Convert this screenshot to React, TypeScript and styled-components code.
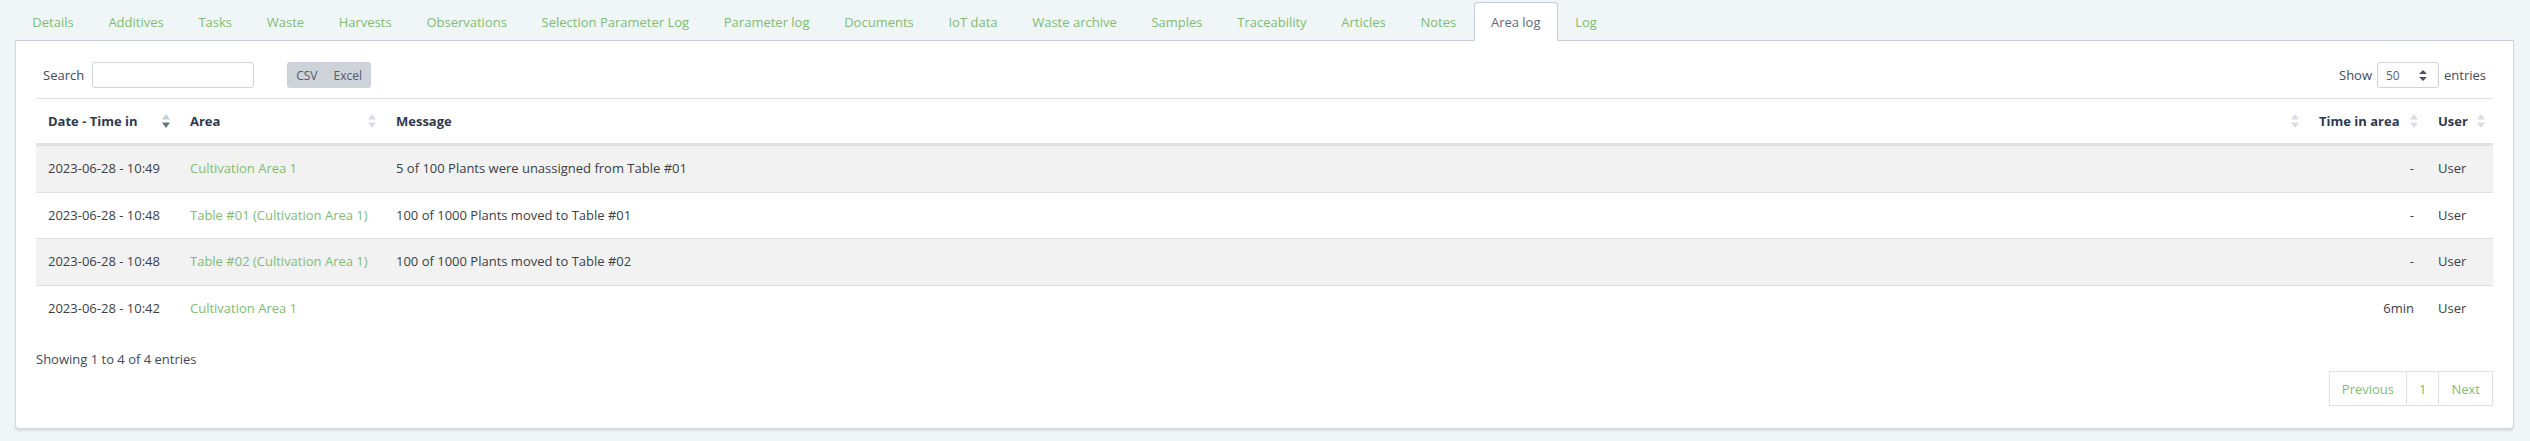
import React from 'react';
import styled, { createGlobalStyle } from 'styled-components';

const GlobalStyle = createGlobalStyle`
  body {
    margin: 0;
    background: #f0f5f8;
    font-family: "Open Sans", "Liberation Sans", sans-serif;
    font-size: 13px;
    color: #3b3f46;
  }
`;

const Page = styled.div`
  padding: 2px 16px 13px 15px;
`;

const TabBar = styled.div`
  display: flex;
  border-bottom: 1px solid #c9ced6;
  height: 38px;
`;

const Tab = styled.div<{ $active?: boolean }>`
  height: 39px;
  box-sizing: border-box;
  display: flex;
  align-items: center;
  padding: 0 16.35px;
  border: 1px solid ${(p) => (p.$active ? '#c9ced6' : 'transparent')};
  border-bottom-color: ${(p) => (p.$active ? '#fff' : 'transparent')};
  border-radius: 4px 4px 0 0;
  background: ${(p) => (p.$active ? '#fff' : 'transparent')};
  color: ${(p) => (p.$active ? '#5d6a80' : '#80bd72')};
  white-space: nowrap;
`;

const Card = styled.div`
  background: #fff;
  border: 1px solid #d5d9de;
  border-top: none;
  border-radius: 0 0 4px 4px;
  box-shadow: 0 2px 2px rgba(0, 0, 0, 0.1);
  padding: 19px 20px 22px 20px;
`;

const Controls = styled.div`
  display: flex;
  align-items: center;
  justify-content: space-between;
  height: 30px;
  margin-bottom: 8px;
  padding: 0 7px;
`;

const ControlGroup = styled.div`
  display: flex;
  align-items: center;
  gap: 5px;
`;

const Label = styled.span`
  color: #454b57;
`;

const SearchInput = styled.input`
  width: 162px;
  height: 26px;
  box-sizing: border-box;
  border: 1px solid #d0d4da;
  border-radius: 3px;
  margin-left: 3px;
`;

const BtnGroup = styled.div`
  display: flex;
  margin-left: 28px;
  background: #ced2d9;
  border-radius: 3px;
  height: 26px;
  padding: 0 1px;
`;

const Btn = styled.button`
  border: none;
  background: transparent;
  font-family: inherit;
  font-size: 12px;
  color: #505a6a;
  padding: 0 8px;
`;

const Select = styled.div`
  width: 62px;
  height: 26px;
  box-sizing: border-box;
  border: 1px solid #d0d4da;
  border-radius: 3px;
  display: flex;
  align-items: center;
  justify-content: space-between;
  padding: 0 11px 0 8px;
  color: #5d6470;
  font-size: 12px;
`;

const Table = styled.table`
  width: 100%;
  border-collapse: collapse;
`;

const Th = styled.th<{ $w?: number }>`
  width: ${(p) => (p.$w ? `${p.$w}px` : 'auto')};
  text-align: left;
  font-weight: 700;
  color: #2e3a4f;
  padding: 12px 8px 12px 12px;
  line-height: 20px;
  border-top: 1px solid #dee2e6;
  border-bottom: 3px solid #dee2e6;
  box-sizing: border-box;
`;

const ThInner = styled.div`
  display: flex;
  align-items: center;
  justify-content: space-between;
  gap: 8px;
`;

const Row = styled.tr<{ $striped?: boolean }>`
  background: ${(p) => (p.$striped ? '#f2f2f2' : '#fff')};
`;

const Td = styled.td<{ $green?: boolean; $right?: boolean }>`
  padding: 13px 12px;
  line-height: 19.6px;
  border-top: 1px solid #dee2e6;
  color: ${(p) => (p.$green ? '#80bd72' : '#3b3f46')};
  text-align: ${(p) => (p.$right ? 'right' : 'left')};
  white-space: nowrap;
`;

const Info = styled.div`
  margin-top: 18px;
  line-height: 20px;
  color: #3e4a5c;
`;

const PagerRow = styled.div`
  display: flex;
  justify-content: flex-end;
  margin-top: 2px;
`;

const PageBtn = styled.div`
  height: 35px;
  box-sizing: border-box;
  display: flex;
  align-items: center;
  padding: 0 12px;
  border: 1px solid #dee2e6;
  margin-left: -1px;
  color: #80bd72;
`;

const SortIcon = ({ dark }: { dark?: boolean }) => (
  <svg width="8" height="14" viewBox="0 0 8 14" style={{ flexShrink: 0 }}>
    <path d="M4 0 L8 5.5 L0 5.5 Z" fill={dark ? '#c7ccd3' : '#d9dde3'} />
    <path d="M0 8.5 L8 8.5 L4 14 Z" fill={dark ? '#6b7380' : '#d9dde3'} />
  </svg>
);

const tabs = [
  'Details', 'Additives', 'Tasks', 'Waste', 'Harvests', 'Observations',
  'Selection Parameter Log', 'Parameter log', 'Documents', 'IoT data',
  'Waste archive', 'Samples', 'Traceability', 'Articles', 'Notes', 'Area log', 'Log',
];

const rows = [
  { date: '2023-06-28 - 10:49', area: 'Cultivation Area 1', msg: '5 of 100 Plants were unassigned from Table #01', time: '-' },
  { date: '2023-06-28 - 10:48', area: 'Table #01 (Cultivation Area 1)', msg: '100 of 1000 Plants moved to Table #01', time: '-' },
  { date: '2023-06-28 - 10:48', area: 'Table #02 (Cultivation Area 1)', msg: '100 of 1000 Plants moved to Table #02', time: '-' },
  { date: '2023-06-28 - 10:42', area: 'Cultivation Area 1', msg: '', time: '6min' },
];

function App() {
  return (
    <Page>
      <GlobalStyle />
      <TabBar>
        {tabs.map((t) => (
          <Tab key={t} $active={t === 'Area log'}>{t}</Tab>
        ))}
      </TabBar>
      <Card>
        <Controls>
          <ControlGroup>
            <Label>Search</Label>
            <SearchInput />
            <BtnGroup>
              <Btn>CSV</Btn>
              <Btn>Excel</Btn>
            </BtnGroup>
          </ControlGroup>
          <ControlGroup>
            <Label>Show</Label>
            <Select>
              <span>50</span>
              <svg width="8" height="11" viewBox="0 0 8 11">
                <path d="M4 0 L8 4 L0 4 Z" fill="#4e5562" />
                <path d="M0 7 L8 7 L4 11 Z" fill="#4e5562" />
              </svg>
            </Select>
            <Label>entries</Label>
          </ControlGroup>
        </Controls>
        <Table>
          <thead>
            <tr>
              <Th $w={142}><ThInner>Date - Time in<SortIcon dark /></ThInner></Th>
              <Th $w={206}><ThInner>Area<SortIcon /></ThInner></Th>
              <Th><ThInner>Message<SortIcon /></ThInner></Th>
              <Th $w={119}><ThInner>Time in area<SortIcon /></ThInner></Th>
              <Th $w={67}><ThInner>User<SortIcon /></ThInner></Th>
            </tr>
          </thead>
          <tbody>
            {rows.map((r, i) => (
              <Row key={i} $striped={i % 2 === 0}>
                <Td>{r.date}</Td>
                <Td $green>{r.area}</Td>
                <Td>{r.msg}</Td>
                <Td $right>{r.time}</Td>
                <Td>User</Td>
              </Row>
            ))}
          </tbody>
        </Table>
        <Info>Showing 1 to 4 of 4 entries</Info>
        <PagerRow>
          <PageBtn>Previous</PageBtn>
          <PageBtn>1</PageBtn>
          <PageBtn>Next</PageBtn>
        </PagerRow>
      </Card>
    </Page>
  );
}

export default App;
